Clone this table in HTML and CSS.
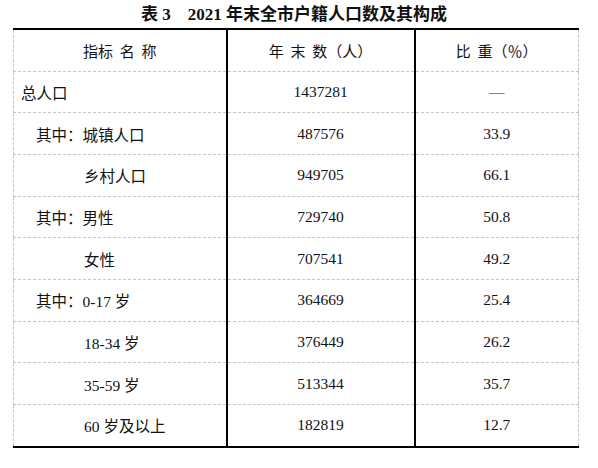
FILE: index.html
```html
<!DOCTYPE html>
<html lang="zh">
<head>
<meta charset="utf-8">
<link rel="stylesheet" href="styles.css">
</head>
<body>
<div class="page">
  <div class="title">表 3　2021 年末全市户籍人口数及其构成</div>
  <table class="stats">
    <colgroup>
      <col class="c1"><col class="c2"><col class="c3">
    </colgroup>
    <thead>
      <tr class="head">
        <th>指标 名 称</th>
        <th>年 末 数（人）</th>
        <th>比 重（％）</th>
      </tr>
    </thead>
    <tbody>
      <tr><td class="name l0">总人口</td><td class="num">1437281</td><td class="pct">—</td></tr>
      <tr><td class="name l1">其中：城镇人口</td><td class="num">487576</td><td class="pct">33.9</td></tr>
      <tr><td class="name l2">乡村人口</td><td class="num">949705</td><td class="pct">66.1</td></tr>
      <tr><td class="name l1">其中：男性</td><td class="num">729740</td><td class="pct">50.8</td></tr>
      <tr><td class="name l2">女性</td><td class="num">707541</td><td class="pct">49.2</td></tr>
      <tr><td class="name l1">其中：0-17 岁</td><td class="num">364669</td><td class="pct">25.4</td></tr>
      <tr><td class="name l2">18-34 岁</td><td class="num">376449</td><td class="pct">26.2</td></tr>
      <tr><td class="name l2">35-59 岁</td><td class="num">513344</td><td class="pct">35.7</td></tr>
      <tr><td class="name l2">60 岁及以上</td><td class="num">182819</td><td class="pct">12.7</td></tr>
    </tbody>
  </table>
</div>
</body>
</html>
```
FILE: styles.css
```css
html, body {
  margin: 0;
  padding: 0;
  background: #fff;
}
body {
  font-family: "Liberation Serif", "Noto Sans CJK SC", serif;
  color: #111;
}
.page {
  width: 598px;
  height: 468px;
}
.title {
  height: 28px;
  line-height: 30px;
  text-align: center;
  font-weight: bold;
  font-size: 17px;
  width: 588px;
}
.stats {
  margin-left: 13px;
  width: 565px;
  border-collapse: collapse;
  table-layout: fixed;
  font-size: 15.5px;
  border-top: 2px solid #000;
  border-bottom: 2px solid #000;
  border-left: 1px dashed #c4c4c4;
  border-right: 1px dashed #c4c4c4;
}
.c1 { width: 213px; }
.c2 { width: 188px; }
.c3 { width: 164px; }
.stats th,
.stats td {
  padding: 0;
  height: 40.7px;
  vertical-align: middle;
  border-bottom: 1px dashed #c4c4c4;
  border-left: 2px solid #000;
  font-weight: normal;
}
.stats th:first-child,
.stats td:first-child {
  border-left: 1px dashed #c4c4c4;
}
.stats tbody tr:last-child td {
  border-bottom: 2px solid #000;
}
.stats .head th {
  height: 40.5px;
  text-align: center;
  font-size: 15px;
  word-spacing: 3px;
}
.stats .name { text-align: left; }
.stats .l0 { padding-left: 7px; }
.stats .l1 { padding-left: 22px; }
.stats .l2 { padding-left: 70px; }
.stats .num, .stats .pct { text-align: center; }
```
